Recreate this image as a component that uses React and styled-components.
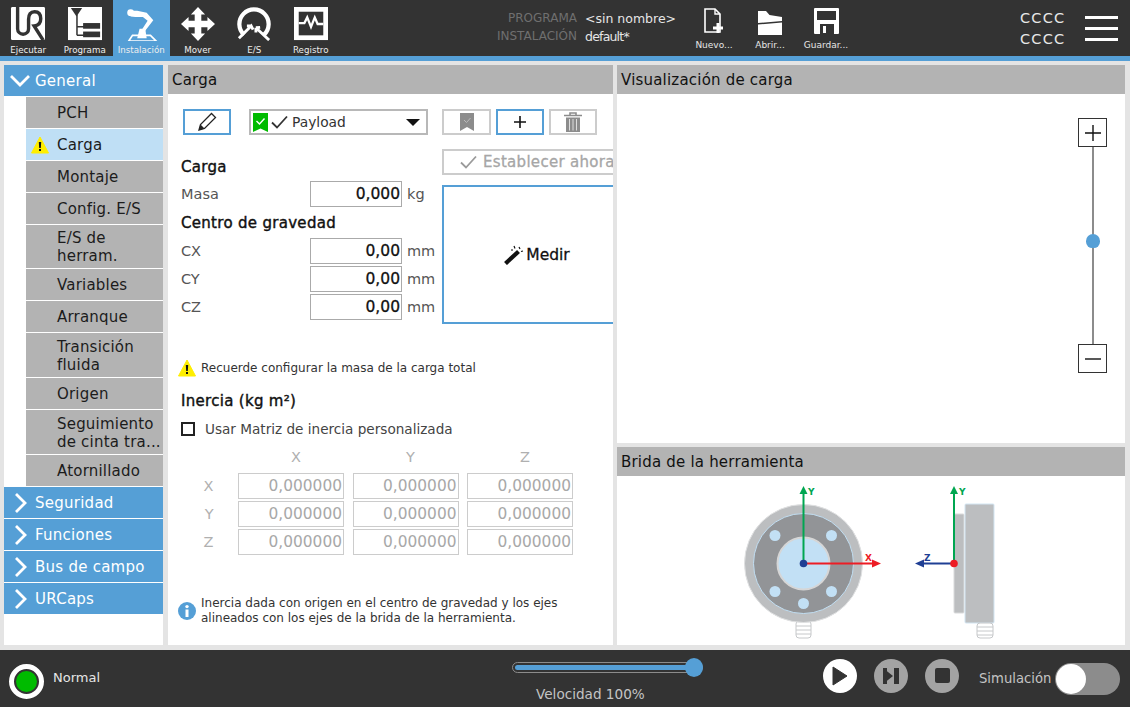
import React from "react";
import styled, { createGlobalStyle } from "styled-components";

const tabs = [
  { label: "Ejecutar", icon: <UrIcon /> },
  { label: "Programa", icon: <ProgramIcon /> },
  { label: "Instalación", icon: <RobotIcon />, active: true },
  { label: "Mover", icon: <MoveIcon /> },
  { label: "E/S", icon: <IoIcon /> },
  { label: "Registro", icon: <LogIcon /> },
];

const subItems = [
  { label: "PCH", h: 31 },
  { label: "Carga", h: 31, active: true },
  { label: "Montaje", h: 31 },
  { label: "Config. E/S", h: 31 },
  { label: "E/S de\nherram.", h: 43 },
  { label: "Variables", h: 31 },
  { label: "Arranque", h: 31 },
  { label: "Transición\nfluida", h: 44 },
  { label: "Origen", h: 31 },
  { label: "Seguimiento\nde cinta tra...", h: 44 },
  { label: "Atornillado", h: 31 },
];

const groups = ["Seguridad", "Funciones", "Bus de campo", "URCaps"];
const axes = ["X", "Y", "Z"];

function UrIcon() {
  return (
    <svg width="36" height="36" viewBox="0 0 36 36">
      <rect width="36" height="35" rx="1.5" fill="#fff" />
      <path d="M7 0V23a5.8 5.8 0 0 0 11.6 0V13Q18.6 5 25 5Q31.5 5 31.5 12.5Q31.5 19.5 24.5 20L34 35" fill="none" stroke="#333" strokeWidth="3.6" />
    </svg>
  );
}

function ProgramIcon() {
  return (
    <svg width="36" height="36" viewBox="0 0 36 36">
      <rect width="36" height="35" fill="#fff" />
      <path d="M3 1H15L9 10Z" fill="#333" />
      <path d="M9.5 8V30M9.5 21H17M9.5 30H17" fill="none" stroke="#333" strokeWidth="1.6" />
      <rect x="16" y="17" width="18" height="6" fill="#333" />
      <rect x="16" y="26" width="18" height="6" fill="#333" />
    </svg>
  );
}

function RobotIcon() {
  return (
    <svg width="36" height="36" viewBox="0 0 36 36">
      <path d="M5 36L9 30H28L34 36Z" fill="none" stroke="#fff" strokeWidth="1.8" />
      <path d="M14 33L16.5 23H22.5L24 33Z" fill="#fff" />
      <path d="M5 4H14L24 6L31 14L21 27H17L25 14.5L20 10.5H12L7 10Z" fill="#fff" />
      <circle cx="7" cy="6" r="3.6" fill="#fff" />
    </svg>
  );
}

function MoveIcon() {
  return (
    <svg width="36" height="36" viewBox="0 0 36 36">
      <path d="M18 0L25.5 8H21.5V14.5H28V10.5L36 18L28 25.5V21.5H21.5V28H25.5L18 36L10.5 28H14.5V21.5H8V25.5L0 18L8 10.5V14.5H14.5V8H10.5Z" fill="#fff" />
    </svg>
  );
}

function IoIcon() {
  return (
    <svg width="36" height="36" viewBox="0 0 36 36">
      <path d="M7.5 29.5A15.5 15.5 0 1 1 28.5 29.5" fill="none" stroke="#fff" strokeWidth="4.5" />
      <path d="M2 33L15 20L17 24M15 20L10.5 20" fill="none" stroke="#fff" strokeWidth="3" />
      <path d="M34 35L20 22M20 22L24.5 21.5M20 22L20 27" fill="none" stroke="#fff" strokeWidth="3" />
    </svg>
  );
}

function LogIcon() {
  return (
    <svg width="36" height="36" viewBox="0 0 36 36">
      <rect width="36" height="35" fill="#fff" />
      <rect x="5" y="5" width="26" height="25" fill="#333" />
      <path d="M5 17H11L14 11L18 21L22 11L25 18H31" fill="none" stroke="#fff" strokeWidth="2.4" />
    </svg>
  );
}

function NewIcon() {
  return (
    <svg width="20" height="27" viewBox="0 0 20 27">
      <path d="M1 1H11L16 6V24H1Z" fill="none" stroke="#fff" strokeWidth="1.6" />
      <path d="M11 1V6H16" fill="none" stroke="#fff" strokeWidth="1.4" />
      <path d="M14 15V25M9 20H19" stroke="#fff" strokeWidth="3" />
    </svg>
  );
}

function OpenIcon() {
  return (
    <svg width="26" height="25" viewBox="0 0 26 25">
      <path d="M1 1H9L12.5 5L25 7V11L1 13Z" fill="#fff" />
      <path d="M1 14.5L25 12.5V25H1Z" fill="#fff" />
    </svg>
  );
}

function SaveIcon() {
  return (
    <svg width="25" height="27" viewBox="0 0 25 27">
      <path d="M1 0H24A1 1 0 0 1 25 1V25A1 1 0 0 1 24 26H1A1 1 0 0 1 0 25V1A1 1 0 0 1 1 0Z" fill="#fff" />
      <rect x="3" y="3" width="19" height="9" fill="#333" />
      <rect x="6" y="16" width="14" height="10" fill="#333" />
      <rect x="9" y="18" width="3" height="7" fill="#fff" />
    </svg>
  );
}

function Chevron({ open }) {
  return (
    <svg width="20" height="20" viewBox="0 0 20 20">
      <path d={open ? "M1 5L10 14L19 5" : "M6 1L15 10L6 19"} fill="none" stroke="#fff" strokeWidth="2.8" />
    </svg>
  );
}

function WarnIcon() {
  return (
    <svg width="18" height="18" viewBox="0 0 18 18">
      <path d="M9 1L17.5 17H.5Z" fill="#ffee00" stroke="#ffee00" strokeWidth="1" strokeLinejoin="round" />
      <path d="M7.8 6H10.2L9.8 12H8.2Z" fill="#111" />
      <rect x="8" y="13" width="2" height="2" fill="#111" />
    </svg>
  );
}

function InfoIcon() {
  return (
    <svg width="18" height="18" viewBox="0 0 18 18">
      <circle cx="9" cy="9" r="9" fill="#559fd6" />
      <circle cx="9" cy="4.6" r="1.7" fill="#fff" />
      <rect x="7.5" y="7.5" width="3" height="7.5" fill="#fff" />
    </svg>
  );
}

function Check({ color }) {
  return (
    <svg width="17" height="14" viewBox="0 0 17 14">
      <path d="M1 7.5L6 12.5L16 1.5" fill="none" stroke={color} strokeWidth="1.8" />
    </svg>
  );
}

function Flange() {
  return (
    <svg width="300" height="170" viewBox="0 0 300 170">
      <rect x="76" y="146" width="15" height="17" rx="3" fill="#fff" stroke="#c6c8ca" />
      <path d="M76 151H91M76 155H91M76 159H91" stroke="#c6c8ca" />
      <circle cx="83.5" cy="88.5" r="59" fill="#bcbec0" stroke="#e0e1e2" strokeWidth="1" />
      <circle cx="83.5" cy="88.5" r="50" fill="#929497" stroke="#c2dff3" />
      <circle cx="83.5" cy="88.5" r="26" fill="#c2e0f5" stroke="#d6d6d6" strokeWidth="2" />
      <circle cx="55" cy="60.5" r="5.5" fill="#c2e0f5" />
      <circle cx="111.5" cy="60.5" r="5.5" fill="#c2e0f5" />
      <circle cx="55" cy="116.5" r="5.5" fill="#c2e0f5" />
      <circle cx="111.5" cy="116.5" r="5.5" fill="#c2e0f5" />
      <circle cx="83.5" cy="128.5" r="5.5" fill="#c2e0f5" />
      <path d="M83.5 88.5V18" stroke="#00a651" strokeWidth="2" />
      <path d="M83.5 11L87.5 19H79.5Z" fill="#00a651" />
      <text x="88" y="20" fontSize="9" fontWeight="700" fill="#00a651" fontFamily="DejaVu Sans, sans-serif">Y</text>
      <path d="M83.5 88.5H154" stroke="#ed1c24" strokeWidth="2" />
      <path d="M161 88.5L152 84.5V92.5Z" fill="#ed1c24" />
      <text x="145" y="86" fontSize="9" fontWeight="700" fill="#ed1c24" fontFamily="DejaVu Sans, sans-serif">X</text>
      <circle cx="83.5" cy="88.5" r="3.8" fill="#1f3f94" />
      <rect x="234" y="39" width="10" height="99" rx="1" fill="#bcbec0" stroke="#d9dadb" />
      <rect x="245" y="29" width="29" height="119" rx="1" fill="#bcbec0" stroke="#d3e6f3" />
      <rect x="257" y="148" width="16" height="15" rx="3" fill="#fff" stroke="#c6c8ca" />
      <path d="M257 152H273M257 156H273M257 160H273" stroke="#c6c8ca" />
      <path d="M234 88.5V18" stroke="#00a651" strokeWidth="2" />
      <path d="M234 11L238 19H230Z" fill="#00a651" />
      <text x="239" y="20" fontSize="9" fontWeight="700" fill="#00a651" fontFamily="DejaVu Sans, sans-serif">Y</text>
      <path d="M234 88.5H202" stroke="#1f3f94" strokeWidth="2" />
      <path d="M195 88.5L204 84.5V92.5Z" fill="#1f3f94" />
      <text x="204" y="86" fontSize="9" fontWeight="700" fill="#1f3f94" fontFamily="DejaVu Sans, sans-serif">Z</text>
      <circle cx="234" cy="88.5" r="3.8" fill="#ed1c24" />
    </svg>
  );
}

const App = () => {
  return (
    <>
      <GlobalStyle />
      <Page>
        <Header>
          {tabs.map((t) => (
            <Tab key={t.label} $active={t.active}>
              {t.icon}
              <TabLabel>{t.label}</TabLabel>
            </Tab>
          ))}
          <ProgramInfo>
            <InfoKey>PROGRAMA</InfoKey>
            <InfoValue>&lt;sin nombre&gt;</InfoValue>
            <InfoKey>INSTALACIÓN</InfoKey>
            <InfoValue $tight>default*</InfoValue>
          </ProgramInfo>
          <FileActions>
            <FileAction>
              <FileIcon><NewIcon /></FileIcon>
              <FileLabel>Nuevo...</FileLabel>
            </FileAction>
            <FileAction>
              <FileIcon><OpenIcon /></FileIcon>
              <FileLabel>Abrir...</FileLabel>
            </FileAction>
            <FileAction>
              <FileIcon><SaveIcon /></FileIcon>
              <FileLabel>Guardar...</FileLabel>
            </FileAction>
          </FileActions>
          <Codes>
            <span>CCCC</span>
            <span>CCCC</span>
          </Codes>
          <Burger>
            <i />
            <i />
            <i />
          </Burger>
        </Header>
        <BlueBar />

        <Content>
          <Sidebar>
            <GroupHead>
              <Chevron open />
              General
            </GroupHead>
            {subItems.map((s) => (
              <SubItem key={s.label} $active={s.active} $h={s.h}>
                {s.active && (
                  <SubIcon>
                    <WarnIcon />
                  </SubIcon>
                )}
                {s.label}
              </SubItem>
            ))}
            {groups.map((g) => (
              <GroupHead key={g}>
                <Chevron />
                {g}
              </GroupHead>
            ))}
          </Sidebar>

          <MainPanel>
            <PanelTitle>Carga</PanelTitle>
            <Toolbar>
              <ToolButton $w={48} $blue>
                <svg width="20" height="20" viewBox="0 0 20 20">
                  <path d="M2 18L3.5 12.5L14.5 1.5L18.5 5.5L7.5 16.5Z" fill="none" stroke="#222" strokeWidth="1.3" />
                  <path d="M2 18L3.5 12.5L7.5 16.5Z" fill="#222" />
                </svg>
              </ToolButton>
              <Select>
                <svg width="15" height="19" viewBox="0 0 15 19">
                  <path d="M0 0H15V19L7.5 15.5L0 19Z" fill="#00bb00" />
                  <path d="M3.5 8L6.5 11L11.5 5.5" fill="none" stroke="#fff" strokeWidth="1.4" />
                </svg>
                <Check color="#333" />
                <SelectText>Payload</SelectText>
                <Caret />
              </Select>
              <ToolButton $w={49} $ml={14}>
                <svg width="14" height="18" viewBox="0 0 14 18">
                  <path d="M0 0H14V18L7 14L0 18Z" fill="#8c8c8c" />
                  <path d="M4 7L6.5 9.5L10.5 5" fill="none" stroke="#bbb" strokeWidth="1" />
                </svg>
              </ToolButton>
              <ToolButton $w={48} $ml={5} $blue>
                <svg width="14" height="14" viewBox="0 0 14 14">
                  <path d="M7 1V13M1 7H13" stroke="#111" strokeWidth="1.6" />
                </svg>
              </ToolButton>
              <ToolButton $w={48} $ml={5}>
                <svg width="18" height="20" viewBox="0 0 18 20">
                  <path d="M0 3.5H18M6 3V1H12V3" fill="none" stroke="#8c8c8c" strokeWidth="1.6" />
                  <path d="M2 5.5H16V20H2Z" fill="#8c8c8c" />
                  <path d="M5.5 7V18.5M9 7V18.5M12.5 7V18.5" stroke="#ddd" strokeWidth="1" />
                </svg>
              </ToolButton>
            </Toolbar>

            <TopArea>
              <FormColumn>
                <SectionTitle>Carga</SectionTitle>
                <FieldRow $mt={4}>
                  <FieldLabel>Masa</FieldLabel>
                  <NumberBox>0,000</NumberBox>
                  <Unit>kg</Unit>
                </FieldRow>
                <SectionTitle $mt={6}>Centro de gravedad</SectionTitle>
                <FieldRows>
                  {["CX", "CY", "CZ"].map((k) => (
                    <FieldRow key={k}>
                      <FieldLabel>{k}</FieldLabel>
                      <NumberBox>0,00</NumberBox>
                      <Unit>mm</Unit>
                    </FieldRow>
                  ))}
                </FieldRows>
              </FormColumn>
              <ActionColumn>
                <SetNow>
                  <Check color="#9a9a9a" />
                  Establecer ahora
                </SetNow>
                <Measure>
                  <svg width="20" height="20" viewBox="0 0 20 20">
                    <path d="M1.5 18.5L14.5 6.5" stroke="#111" strokeWidth="4.2" />
                    <path d="M15 2L16 4M19 6L17 6.5M10 1L11 3.5M7 5H9" stroke="#111" strokeWidth="1.2" />
                  </svg>
                  Medir
                </Measure>
              </ActionColumn>
            </TopArea>

            <NoteRow $mt={35}>
              <WarnIcon />
              <NoteText>Recuerde configurar la masa de la carga total</NoteText>
            </NoteRow>

            <SectionBlock>
              <SectionTitle>Inercia (kg m²)</SectionTitle>
              <CheckRow>
                <CheckBox />
                Usar Matriz de inercia personalizada
              </CheckRow>
            </SectionBlock>

            <Matrix>
              <span />
              {axes.map((a) => (
                <MatrixHead key={a}>{a}</MatrixHead>
              ))}
              {axes.map((a) => (
                <React.Fragment key={a}>
                  <MatrixKey>{a}</MatrixKey>
                  {axes.map((b) => (
                    <MatrixCell key={b}>0,000000</MatrixCell>
                  ))}
                </React.Fragment>
              ))}
            </Matrix>

            <NoteRow $mt={41}>
              <InfoIcon />
              <NoteText>
                Inercia dada con origen en el centro de gravedad y los ejes
                <br />
                alineados con los ejes de la brida de la herramienta.
              </NoteText>
            </NoteRow>
          </MainPanel>

          <RightColumn>
            <VizPanel>
              <PanelTitle>Visualización de carga</PanelTitle>
              <VizCanvas>
                <ZoomRail>
                  <ZoomButton>
                    <svg width="18" height="18" viewBox="0 0 18 18">
                      <path d="M9 1V17M1 9H17" stroke="#111" strokeWidth="1.4" />
                    </svg>
                  </ZoomButton>
                  <ZoomLine>
                    <ZoomThumb />
                  </ZoomLine>
                  <ZoomButton>
                    <svg width="18" height="18" viewBox="0 0 18 18">
                      <path d="M1 9H17" stroke="#111" strokeWidth="1.4" />
                    </svg>
                  </ZoomButton>
                </ZoomRail>
              </VizCanvas>
            </VizPanel>
            <FlangePanel>
              <PanelTitle>Brida de la herramienta</PanelTitle>
              <FlangeBody>
                <Flange />
              </FlangeBody>
            </FlangePanel>
          </RightColumn>
        </Content>

        <Footer>
          <StatusRing>
            <StatusDot />
          </StatusRing>
          <StatusText>Normal</StatusText>
          <SpeedBlock>
            <SpeedTrack>
              <SpeedFill style={{ width: "100%" }} />
              <SpeedThumb />
            </SpeedTrack>
            <SpeedLabel>Velocidad 100%</SpeedLabel>
          </SpeedBlock>
          <RoundButton $on $ml={120}>
            <svg width="18" height="20" viewBox="0 0 18 20">
              <path d="M2 1L16 10L2 19Z" fill="#333" stroke="#333" strokeWidth="1" strokeLinejoin="round" />
            </svg>
          </RoundButton>
          <RoundButton $ml={17}>
            <svg width="18" height="18" viewBox="0 0 18 18">
              <path d="M1 1L11 9L1 17Z" fill="#333" />
              <path d="M1 1H5V17H1Z" fill="#333" />
              <rect x="12" y="1" width="5" height="16" fill="#333" />
            </svg>
          </RoundButton>
          <RoundButton $ml={17}>
            <StopSquare />
          </RoundButton>
          <SimLabel>Simulación</SimLabel>
          <Toggle>
            <ToggleKnob />
          </Toggle>
        </Footer>
      </Page>
    </>
  );
};

// global
const GlobalStyle = createGlobalStyle`
  html, body {
    margin: 0;
    padding: 0;
    height: 100%;
    overflow: hidden;
  }
  body {
    font-family: "DejaVu Sans", sans-serif;
    background-color: #e4e4e4;
    color: #222222;
  }
  * {
    box-sizing: border-box;
  }
`;

const Page = styled.div`
  display: flex;
  flex-direction: column;
  width: 1130px;
  height: 707px;
  overflow: hidden;
`;

// header
const Header = styled.div`
  display: flex;
  height: 56px;
  background-color: #333333;
  color: #ffffff;
  flex-shrink: 0;
`;

const Tab = styled.div`
  display: flex;
  flex-direction: column;
  align-items: center;
  width: 56.5px;
  height: 56px;
  padding-top: 7px;
  background-color: ${(p) => (p.$active ? "#559fd6" : "transparent")};
`;

const TabLabel = styled.span`
  margin-top: 4px;
  font-size: 8.7px;
  line-height: 11px;
  white-space: nowrap;
  color: #eeeeee;
`;

const ProgramInfo = styled.div`
  display: grid;
  grid-template-columns: 80px auto;
  grid-auto-rows: 18px;
  column-gap: 8px;
  align-content: center;
  align-self: center;
  width: 178px;
  margin-left: 158px;
  margin-top: 1px;
  font-size: 12.5px;
`;

const InfoKey = styled.span`
  color: #6f6f6f;
  font-size: 12px;
  text-align: right;
  white-space: nowrap;
  justify-self: end;
`;

const InfoValue = styled.span`
  color: #e6e6e6;
  letter-spacing: ${(p) => (p.$tight ? "-0.8px" : "0")};
  white-space: nowrap;
`;

const FileActions = styled.div`
  display: flex;
  margin-left: 11px;
`;

const FileAction = styled.div`
  display: flex;
  flex-direction: column;
  align-items: center;
  width: 56px;
`;

const FileIcon = styled.div`
  display: flex;
  align-items: flex-end;
  justify-content: center;
  height: 35px;
`;

const FileLabel = styled.span`
  margin-top: 5px;
  font-size: 9px;
  line-height: 11px;
  white-space: nowrap;
  color: #e6e6e6;
`;

const Codes = styled.div`
  display: flex;
  flex-direction: column;
  justify-content: center;
  gap: 3px;
  margin-left: 166px;
  font-size: 14.5px;
  line-height: 18px;
  letter-spacing: 1.2px;
  color: #e8e8e8;
`;

const Burger = styled.div`
  display: flex;
  flex-direction: column;
  justify-content: center;
  gap: 8px;
  margin-left: 20px;
  width: 33px;

  i {
    display: block;
    height: 3px;
    background-color: #ffffff;
  }
`;

const BlueBar = styled.div`
  height: 5px;
  background-color: #559fd6;
  flex-shrink: 0;
`;

// content
const Content = styled.div`
  display: flex;
  flex: 1;
  min-height: 0;
  gap: 4px;
  padding: 4px 5px 5px 4px;
`;

const Sidebar = styled.div`
  display: flex;
  flex-direction: column;
  gap: 1px;
  width: 159px;
  margin-right: 1px;
  background-color: #ffffff;
  flex-shrink: 0;
`;

const GroupHead = styled.div`
  display: flex;
  align-items: center;
  gap: 5px;
  height: 31px;
  padding-left: 6px;
  background-color: #559fd6;
  color: #ffffff;
  font-size: 15px;
  letter-spacing: 0.25px;
  flex-shrink: 0;
`;

const SubItem = styled.div`
  position: relative;
  display: flex;
  align-items: center;
  height: ${(p) => p.$h}px;
  margin-left: 22px;
  padding-left: 31px;
  padding-top: ${(p) => (p.$h === 44 ? 2 : 0)}px;
  background-color: ${(p) => (p.$active ? "#bfdff5" : "#b3b3b3")};
  color: #1c1c1c;
  font-size: 15px;
  line-height: 18px;
  letter-spacing: 0.2px;
  white-space: pre-line;
  flex-shrink: 0;
`;

const SubIcon = styled.span`
  position: absolute;
  left: 5px;
  top: 7px;
  display: flex;
`;

const MainPanel = styled.div`
  display: flex;
  flex-direction: column;
  width: 445px;
  overflow: hidden;
  background-color: #ffffff;
  flex-shrink: 0;
`;

const PanelTitle = styled.div`
  display: flex;
  align-items: center;
  height: 29px;
  padding-left: 4px;
  background-color: #b3b3b3;
  color: #111111;
  font-size: 15px;
  letter-spacing: 0.2px;
  flex-shrink: 0;
`;

const Toolbar = styled.div`
  display: flex;
  align-items: center;
  height: 26px;
  margin-top: 15px;
  padding-left: 15px;
`;

const ToolButton = styled.div`
  display: flex;
  align-items: center;
  justify-content: center;
  width: ${(p) => p.$w}px;
  height: 26px;
  margin-left: ${(p) => p.$ml || 0}px;
  border: 2px solid ${(p) => (p.$blue ? "#559fd6" : "#cccccc")};
`;

const Select = styled.div`
  display: flex;
  align-items: center;
  gap: 3px;
  width: 179px;
  height: 26px;
  margin-left: 18px;
  padding: 0 6px 0 2px;
  border: 2px solid #b8b8b8;
`;

const SelectText = styled.span`
  flex: 1;
  margin-left: 1px;
  font-size: 13.8px;
  color: #333333;
`;

const Caret = styled.span`
  width: 0;
  height: 0;
  border-left: 7.5px solid transparent;
  border-right: 7.5px solid transparent;
  border-top: 7px solid #111111;
`;

const TopArea = styled.div`
  display: flex;
  margin-top: 14px;
`;

const FormColumn = styled.div`
  display: flex;
  flex-direction: column;
  width: 274px;
  padding: 8px 0 0 13px;
  flex-shrink: 0;
`;

const SectionTitle = styled.div`
  height: 20px;
  margin-top: ${(p) => p.$mt || 0}px;
  font-size: 15px;
  line-height: 20px;
  letter-spacing: 0.3px;
  color: #111111;
  -webkit-text-stroke: 0.4px #111111;
  white-space: nowrap;
`;

const FieldRow = styled.div`
  display: flex;
  align-items: center;
  height: 26px;
  margin-top: ${(p) => p.$mt || 0}px;
`;

const FieldRows = styled.div`
  display: flex;
  flex-direction: column;
  gap: 2px;
  margin-top: 5px;
`;

const FieldLabel = styled.span`
  width: 129px;
  font-size: 14.5px;
  color: #555555;
`;

const NumberBox = styled.div`
  width: 92px;
  height: 26px;
  padding-right: 1px;
  border: 1px solid #aaaaaa;
  text-align: right;
  font-size: 15.5px;
  line-height: 25px;
  color: #111111;
  -webkit-text-stroke: 0.3px #111111;
`;

const Unit = styled.span`
  margin-left: 5px;
  font-size: 14.5px;
  color: #555555;
`;

const ActionColumn = styled.div`
  display: flex;
  flex-direction: column;
  gap: 10px;
  width: 190px;
  flex-shrink: 0;
`;

const SetNow = styled.div`
  display: flex;
  align-items: center;
  gap: 6px;
  height: 26px;
  padding-left: 16px;
  border: 2px solid #cccccc;
  font-size: 15px;
  letter-spacing: 0.3px;
  color: #a6a6a6;
  -webkit-text-stroke: 0.3px #a6a6a6;
  white-space: nowrap;
`;

const Measure = styled.div`
  display: flex;
  align-items: center;
  justify-content: center;
  gap: 2px;
  height: 139px;
  border: 2px solid #559fd6;
  font-size: 15.5px;
  color: #111111;
  -webkit-text-stroke: 0.3px #111111;
`;

const NoteRow = styled.div`
  display: flex;
  align-items: center;
  gap: 5px;
  margin-top: ${(p) => p.$mt}px;
  padding-left: 10px;
`;

const NoteText = styled.span`
  font-size: 12px;
  line-height: 15px;
  color: #333333;
`;

const SectionBlock = styled.div`
  display: flex;
  flex-direction: column;
  margin-top: 14px;
  padding-left: 13px;
`;

const CheckRow = styled.div`
  display: flex;
  align-items: center;
  gap: 10px;
  margin-top: 10px;
  font-size: 13.6px;
  color: #444444;
`;

const CheckBox = styled.span`
  width: 14px;
  height: 14px;
  border: 2px solid #222222;
`;

const Matrix = styled.div`
  display: grid;
  grid-template-columns: 61.5px repeat(3, 106px);
  column-gap: 8.5px;
  row-gap: 2px;
  margin-top: 12px;
`;

const MatrixHead = styled.span`
  height: 22px;
  padding-left: 10px;
  text-align: center;
  font-size: 14.5px;
  color: #b0b0b0;
`;

const MatrixKey = styled.span`
  padding-right: 16px;
  text-align: right;
  font-size: 14.5px;
  line-height: 26px;
  color: #b0b0b0;
`;

const MatrixCell = styled.div`
  height: 26px;
  padding-right: 1px;
  border: 1px solid #cccccc;
  text-align: right;
  font-size: 15.4px;
  line-height: 25px;
  color: #a8a8a8;
`;

const RightColumn = styled.div`
  display: flex;
  flex-direction: column;
  gap: 4px;
  flex: 1;
  min-width: 0;
`;

const VizPanel = styled.div`
  display: flex;
  flex-direction: column;
  height: 378px;
  background-color: #ffffff;
  flex-shrink: 0;
`;

const VizCanvas = styled.div`
  display: flex;
  justify-content: flex-end;
  flex: 1;
  padding: 24px 18px 70px 0;
`;

const ZoomRail = styled.div`
  display: flex;
  flex-direction: column;
  align-items: center;
  width: 29px;
`;

const ZoomButton = styled.div`
  display: flex;
  align-items: center;
  justify-content: center;
  width: 29px;
  height: 29px;
  border: 1px solid #333333;
  flex-shrink: 0;
`;

const ZoomLine = styled.div`
  position: relative;
  flex: 1;
  width: 2px;
  background-color: #8c8c8c;
`;

const ZoomThumb = styled.div`
  position: absolute;
  top: 87px;
  left: -6px;
  width: 14px;
  height: 14px;
  border-radius: 50% 50% 45% 45%;
  background-color: #559fd6;
`;

const FlangePanel = styled.div`
  display: flex;
  flex-direction: column;
  flex: 1;
  min-height: 0;
  background-color: #ffffff;
`;

const FlangeBody = styled.div`
  display: flex;
  justify-content: center;
  margin-top: -1px;
  padding-right: 2px;
`;

// footer
const Footer = styled.div`
  display: flex;
  align-items: center;
  height: 57px;
  padding-left: 9px;
  background-color: #333333;
  flex-shrink: 0;
`;

const StatusRing = styled.div`
  display: flex;
  align-items: center;
  justify-content: center;
  width: 35px;
  height: 35px;
  margin-top: 5px;
  border: 5px solid #ffffff;
  border-radius: 50%;
  background-color: #333333;
`;

const StatusDot = styled.div`
  width: 21px;
  height: 21px;
  border-radius: 50%;
  background-color: #00bb00;
`;

const StatusText = styled.span`
  width: 459px;
  margin-left: 9px;
  margin-top: -3px;
  font-size: 13px;
  color: #e6e6e6;
`;

const SpeedBlock = styled.div`
  display: flex;
  flex-direction: column;
  align-items: flex-start;
  width: 191px;
  margin-top: 7px;
`;

const SpeedTrack = styled.div`
  position: relative;
  width: 100%;
  height: 11px;
  padding: 2px;
  border: 1px solid #8c8c8c;
  border-radius: 6px;
`;

const SpeedFill = styled.div`
  height: 100%;
  border-radius: 3px;
  background-color: #559fd6;
`;

const SpeedThumb = styled.div`
  position: absolute;
  top: -5px;
  right: -1px;
  width: 18px;
  height: 19px;
  border-radius: 50%;
  background-color: #559fd6;
`;

const SpeedLabel = styled.span`
  margin-top: 13px;
  margin-left: 24px;
  font-size: 13.6px;
  color: #c4c4c4;
`;

const RoundButton = styled.div`
  display: flex;
  align-items: center;
  justify-content: center;
  width: 34px;
  height: 34px;
  margin-left: ${(p) => p.$ml}px;
  margin-top: -6px;
  border-radius: 50%;
  background-color: ${(p) => (p.$on ? "#ffffff" : "#a3a3a3")};
`;

const StopSquare = styled.span`
  width: 15px;
  height: 15px;
  border-radius: 2px;
  background-color: #333333;
`;

const SimLabel = styled.span`
  margin-left: 20px;
  font-size: 13.2px;
  color: #c4c4c4;
`;

const Toggle = styled.div`
  display: flex;
  align-items: center;
  width: 65px;
  height: 32px;
  margin-left: 4px;
  padding-left: 1px;
  border-radius: 16px;
  background-color: #8c8c8c;
`;

const ToggleKnob = styled.div`
  width: 30px;
  height: 30px;
  border-radius: 50%;
  background-color: #ffffff;
`;

export default App;
